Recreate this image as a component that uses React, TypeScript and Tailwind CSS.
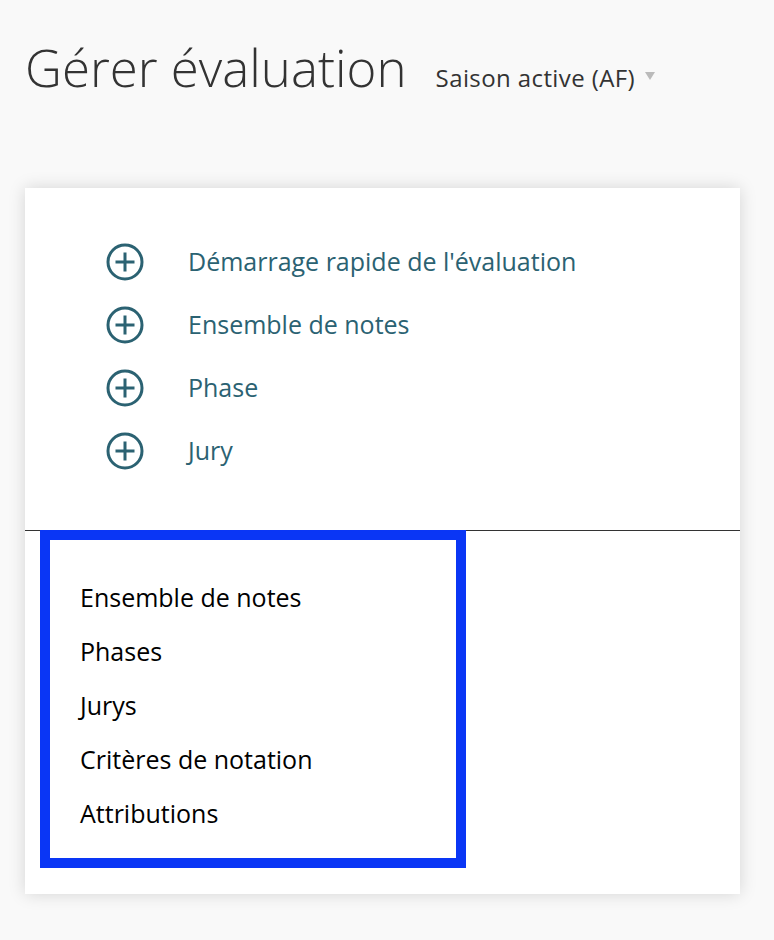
import { useState } from 'react';

const quickLinks = ["Démarrage rapide de l'évaluation", 'Ensemble de notes', 'Phase', 'Jury'];

const sections = ['Ensemble de notes', 'Phases', 'Jurys', 'Critères de notation', 'Attributions'];

const PlusCircle = () => (
  <svg width="38" height="38" viewBox="0 0 38 38" fill="none" stroke="#2b6272" strokeWidth="3" strokeLinecap="butt">
    <circle cx="19" cy="19" r="17" />
    <path d="M19 9.5v19M9.5 19h19" />
  </svg>
);

export default function App() {
  const [season] = useState('Saison active (AF)');

  return (
    <div className="min-h-[940px] bg-[#f9f9f9] font-['Open_Sans',sans-serif] pt-[42px]">
      <div className="flex items-baseline pl-[25px]">
        <h1 className="text-[51px] font-light text-[#333] leading-none">Gérer évaluation</h1>
        <button className="ml-[29px] flex items-center gap-[10px] text-[24px] tracking-[0.4px] text-[#333]">
          {season}
          <span className="mt-[-4px] h-0 w-0 border-x-[5px] border-t-[8px] border-x-transparent border-t-[#bbb]" />
        </button>
      </div>

      <div className="mt-[92px] mx-[25px] w-[715px] bg-white shadow-[0_0_16px_rgba(0,0,0,0.15)]">
        <ul className="flex flex-col gap-[25px] pl-[81px] pt-[55px] pb-[60px]">
          {quickLinks.map((label) => (
            <li key={label}>
              <a href="#" className="flex items-center gap-[44px] text-[25px] text-[#2b6272]">
                <PlusCircle />
                {label}
              </a>
            </li>
          ))}
        </ul>

        <div className="border-t border-[#333] pb-[26px]">
          <div className="-mt-px ml-[15px] w-[426px] border-[10px] border-[#0a36f5] pt-[41px] pb-[29px] pl-[30px]">
            <ul className="flex flex-col gap-[22px]">
              {sections.map((label) => (
                <li key={label} className="text-[25px] leading-[32px] text-black">
                  {label}
                </li>
              ))}
            </ul>
          </div>
        </div>
      </div>
    </div>
  );
}
